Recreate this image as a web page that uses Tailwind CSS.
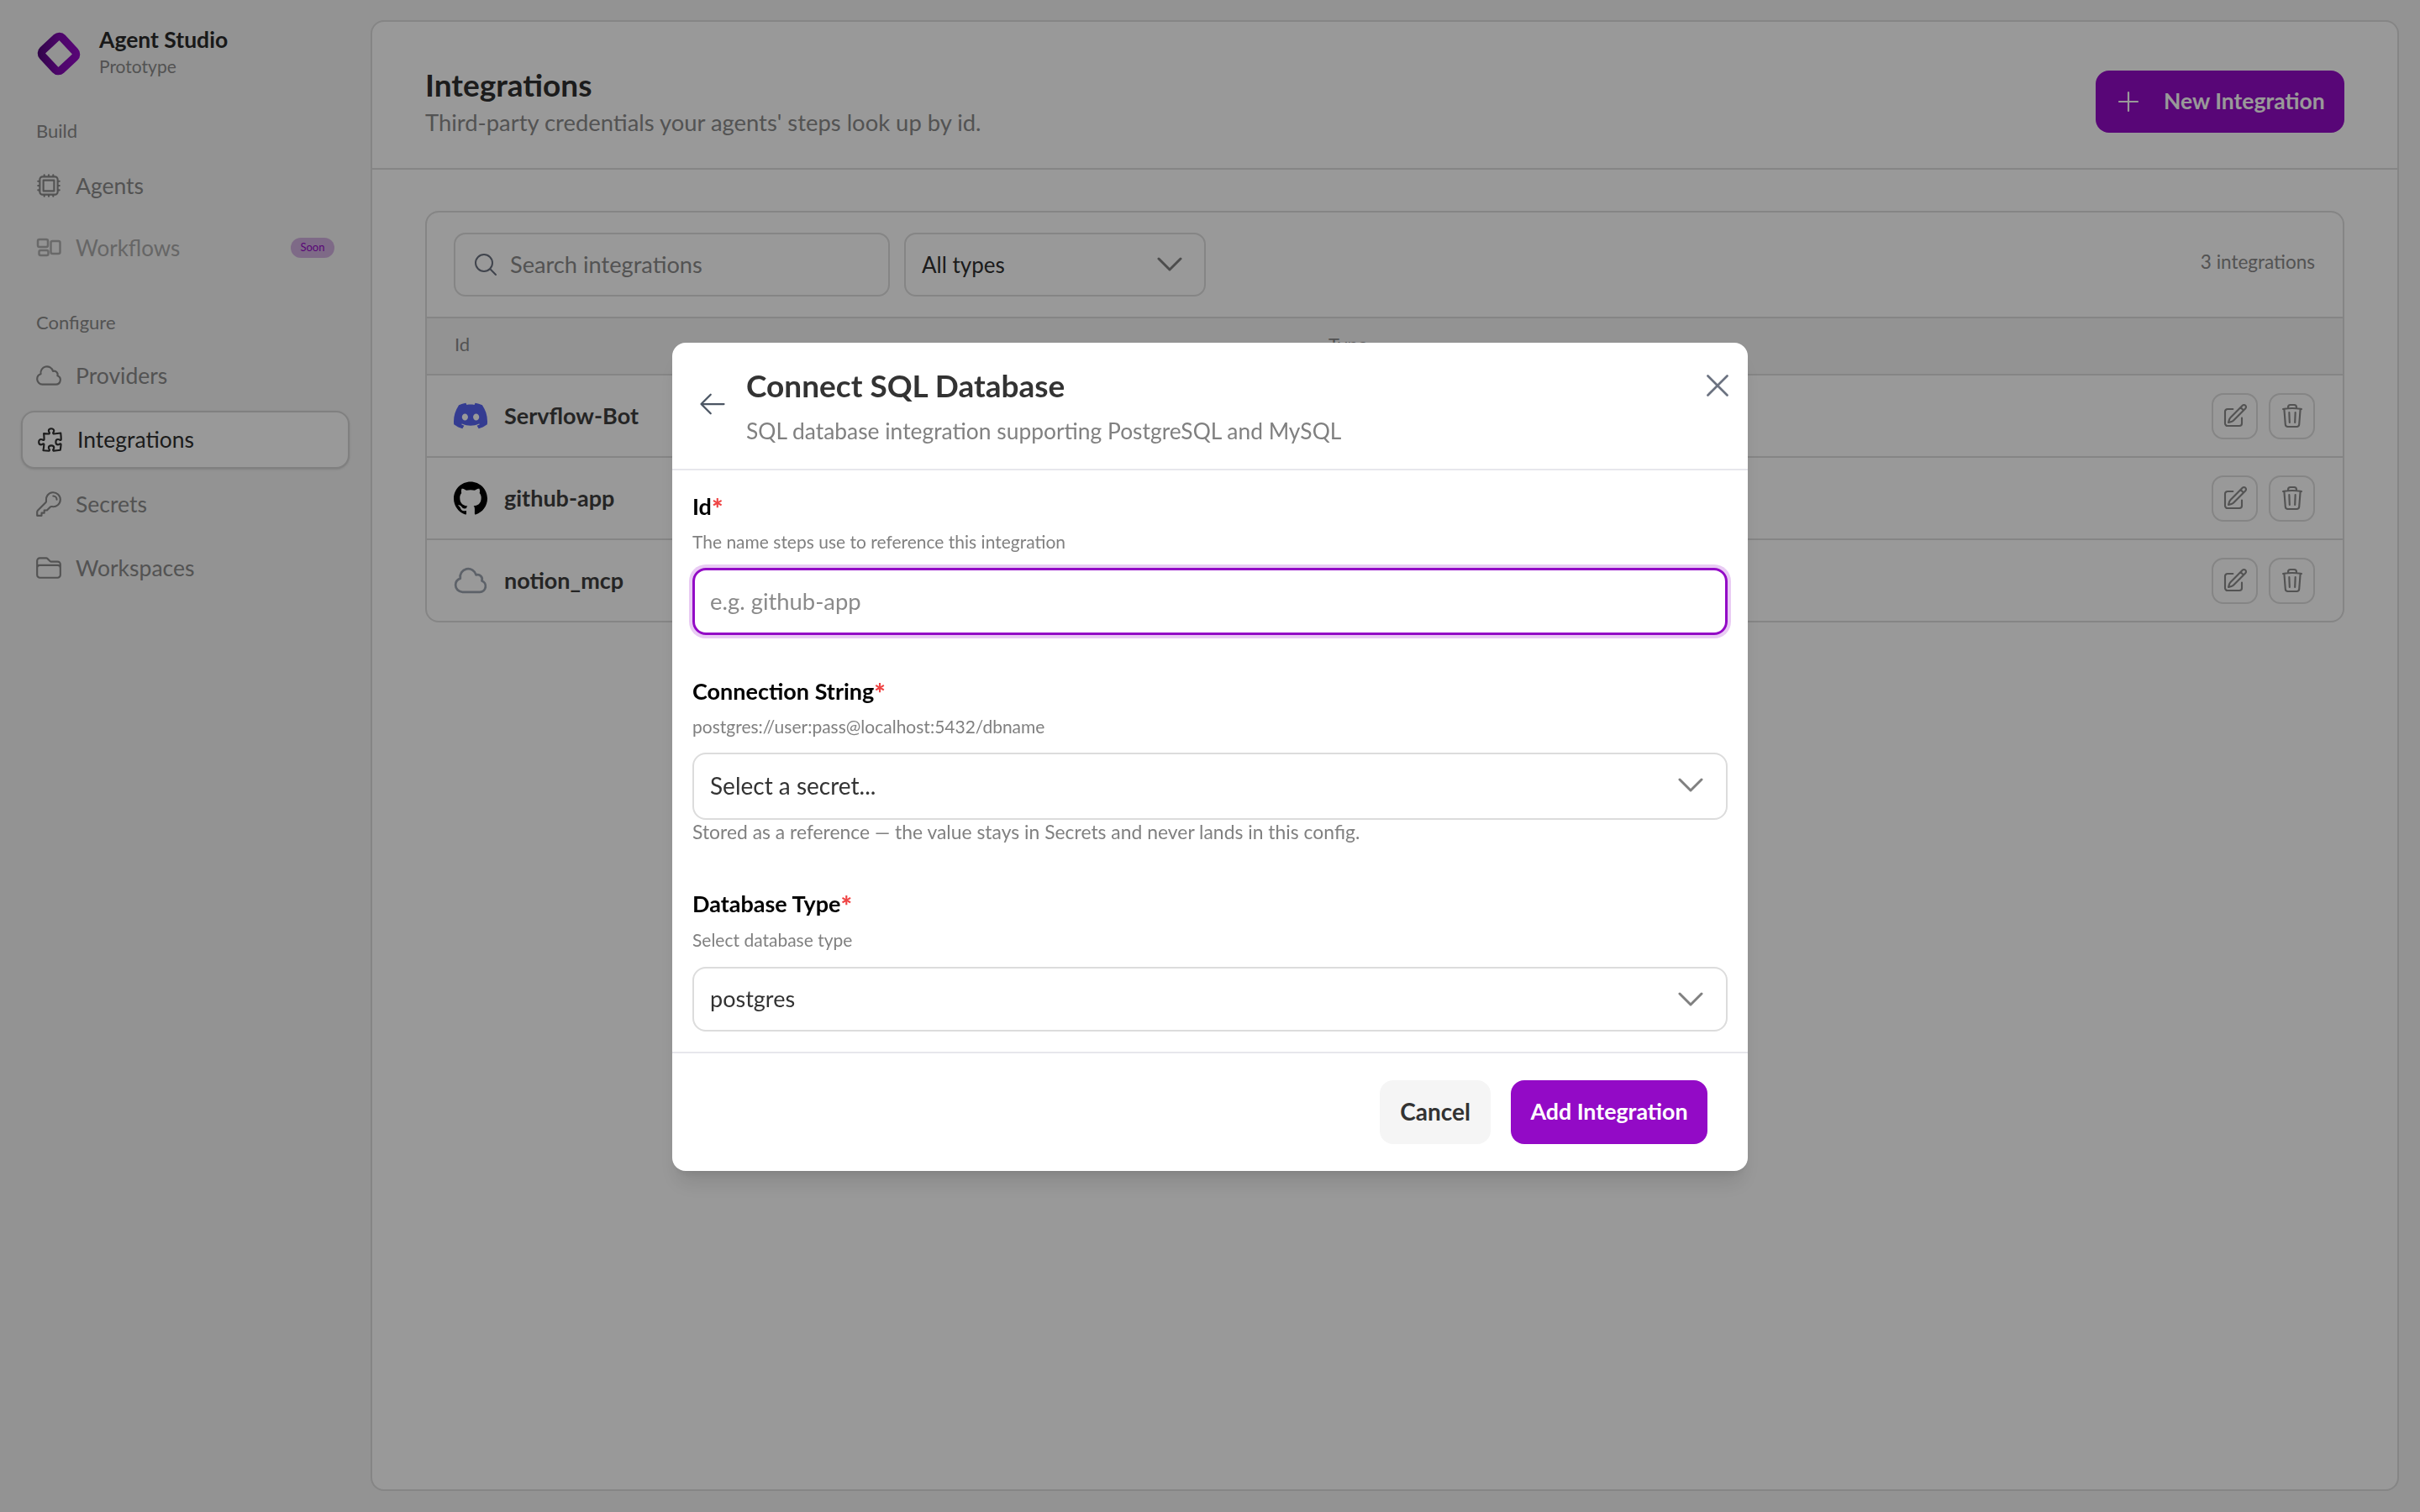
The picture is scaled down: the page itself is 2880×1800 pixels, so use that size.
<!DOCTYPE html>
<html lang="en">
<head>
    <meta charset="UTF-8">
    <title>Agent Studio - Integrations</title>
    <script src="https://cdn.jsdelivr.net/npm/@tailwindcss/browser@4"></script>
</head>
<body class="bg-[#f5f5f5] text-[#2f2f2f] font-['Lato',sans-serif]">

    <div class="flex h-screen">
        <!-- Sidebar -->
        <aside class="w-[440px] shrink-0 pl-[25px] pr-[24px]">
            <div class="mt-[38px] ml-[19px] flex h-[52px] items-start gap-[22px]">
                <svg class="h-[52px] w-[52px]" viewBox="0 0 52 52" fill="none">
                    <defs>
                        <linearGradient id="logoGrad" gradientUnits="userSpaceOnUse" x1="8" y1="44" x2="44" y2="10">
                            <stop offset="0" stop-color="#500878"/>
                            <stop offset="0.5" stop-color="#800ab0"/>
                            <stop offset="1" stop-color="#930ac6"/>
                        </linearGradient>
                    </defs>
                    <rect x="10" y="10" width="32" height="32" rx="5" transform="rotate(47 26 26)" stroke="url(#logoGrad)" stroke-width="9.5" stroke-linejoin="round"/>
                </svg>
                <div class="-mt-[8px]">
                    <p class="text-[26.5px] leading-[34px] font-bold text-[#2b2b2b]">Agent Studio</p>
                    <p class="mt-[1px] text-[21px] leading-[28px] text-[#8a8a8a]">Prototype</p>
                </div>
            </div>

            <p class="mt-[51px] ml-[18px] text-[22px] leading-[30px] text-[#8a8a8a]">Build</p>
            <nav class="mt-[16px] flex flex-col gap-[6px] text-[26.5px] text-[#8a8a8a]">
                <a class="flex h-[68px] items-center gap-[15px] pl-[16px]">
                    <svg class="h-[34px] w-[34px]" viewBox="0 0 24 24" fill="none" stroke="currentColor" stroke-width="1.5" stroke-linecap="round" stroke-linejoin="round"><path d="M8.25 3v1.5M4.5 8.25H3m18 0h-1.5M4.5 12H3m18 0h-1.5m-15 3.75H3m18 0h-1.5M8.25 19.5V21M12 3v1.5m0 15V21m3.75-18v1.5m0 15V21m-9-1.5h10.5a2.25 2.25 0 0 0 2.25-2.25V6.75a2.25 2.25 0 0 0-2.25-2.25H6.75A2.25 2.25 0 0 0 4.5 6.75v10.5a2.25 2.25 0 0 0 2.25 2.25Zm.75-12h9v9h-9v-9Z"/></svg>
                    <span class="pt-[2px]">Agents</span>
                </a>
                <a class="flex h-[68px] items-center gap-[15px] pl-[16px] pr-[18px]">
                    <svg class="h-[34px] w-[34px] text-[#b0b0b0]" viewBox="0 0 34 34" fill="none" stroke="currentColor" stroke-width="2.5"><rect x="4" y="7" width="12" height="9" rx="2"/><rect x="5.5" y="20" width="11" height="6" rx="2"/><rect x="19.5" y="9" width="11" height="15" rx="2"/></svg>
                    <span class="text-[26px] text-[#aaaaaa]">Workflows</span>
                    <span class="ml-auto flex h-[24px] w-[52px] items-center justify-center rounded-full bg-[#d3b1e1] text-[13px] text-[#930ac6]">Soon</span>
                </a>
            </nav>

            <p class="mt-[40px] ml-[18px] text-[22px] leading-[30px] text-[#8a8a8a]">Configure</p>
            <nav class="mt-[14px] flex flex-col gap-[8px] text-[26.5px] text-[#8a8a8a]">
                <a class="flex h-[68px] items-center gap-[15px] pl-[16px]">
                    <svg class="h-[34px] w-[34px]" viewBox="0 0 24 24" fill="none" stroke="currentColor" stroke-width="1.5" stroke-linecap="round" stroke-linejoin="round"><path d="M2.25 15a4.5 4.5 0 0 0 4.5 4.5H18a3.75 3.75 0 0 0 1.332-7.257 3 3 0 0 0-3.758-3.848 5.25 5.25 0 0 0-10.233 2.33A4.502 4.502 0 0 0 2.25 15Z"/></svg>
                    <span class="pt-[1px]">Providers</span>
                </a>
                <a class="flex h-[69px] items-center gap-[15px] rounded-[16px] border-2 border-[#d6d6d6] bg-white pl-[16px] text-[#2f2f2f] shadow-sm">
                    <svg class="h-[34px] w-[34px]" viewBox="0 0 24 24" fill="none" stroke="currentColor" stroke-width="1.5" stroke-linecap="round" stroke-linejoin="round"><path d="M14.25 6.087c0-.355.186-.676.401-.959.221-.29.349-.634.349-1.003 0-1.036-1.007-1.875-2.25-1.875s-2.25.84-2.25 1.875c0 .369.128.713.349 1.003.215.283.401.604.401.959v0a.64.64 0 0 1-.657.643 48.39 48.39 0 0 1-4.163-.3c.186 1.613.293 3.25.315 4.907a.656.656 0 0 1-.658.663v0c-.355 0-.676-.186-.959-.401a1.647 1.647 0 0 0-1.003-.349c-1.036 0-1.875 1.007-1.875 2.25s.84 2.25 1.875 2.25c.369 0 .713-.128 1.003-.349.283-.215.604-.401.959-.401v0c.31 0 .555.26.532.57a48.039 48.039 0 0 1-.642 5.056c1.518.19 3.058.309 4.616.354a.64.64 0 0 0 .657-.643v0c0-.355-.186-.676-.401-.959a1.647 1.647 0 0 1-.349-1.003c0-1.035 1.008-1.875 2.25-1.875 1.243 0 2.25.84 2.25 1.875 0 .369-.128.713-.349 1.003-.215.283-.4.604-.4.959v0c0 .333.277.599.61.58a48.1 48.1 0 0 0 5.427-.63 48.05 48.05 0 0 0 .582-4.717.532.532 0 0 0-.533-.57v0c-.355 0-.676.186-.959.401-.29.221-.634.349-1.003.349-1.035 0-1.875-1.007-1.875-2.25s.84-2.25 1.875-2.25c.37 0 .713.128 1.003.349.283.215.604.401.96.401v0a.656.656 0 0 0 .658-.663 48.422 48.422 0 0 0-.37-5.36c-1.886.342-3.81.574-5.766.689a.578.578 0 0 1-.61-.58v0Z"/></svg>
                    <span class="pt-[1px]">Integrations</span>
                </a>
                <a class="flex h-[68px] items-center gap-[15px] pl-[16px]">
                    <svg class="h-[34px] w-[34px]" viewBox="0 0 24 24" fill="none" stroke="currentColor" stroke-width="1.5" stroke-linecap="round" stroke-linejoin="round"><path d="M15.75 5.25a3 3 0 0 1 3 3m3 0a6 6 0 0 1-7.029 5.912c-.563-.097-1.159.026-1.563.43L10.5 17.25H8.25v2.25H6v2.25H2.25v-2.818c0-.597.237-1.17.659-1.591l6.499-6.499c.404-.404.527-1 .43-1.563A6 6 0 1 1 21.75 8.25Z"/></svg>
                    <span class="pt-[1px]">Secrets</span>
                </a>
                <a class="flex h-[68px] items-center gap-[15px] pl-[16px]">
                    <svg class="h-[34px] w-[34px]" viewBox="0 0 24 24" fill="none" stroke="currentColor" stroke-width="1.5" stroke-linecap="round" stroke-linejoin="round"><path d="M2.25 12.75V12A2.25 2.25 0 0 1 4.5 9.75h15A2.25 2.25 0 0 1 21.75 12v.75m-8.69-6.44-2.12-2.12a1.5 1.5 0 0 0-1.061-.44H4.5A2.25 2.25 0 0 0 2.25 6v12a2.25 2.25 0 0 0 2.25 2.25h15A2.25 2.25 0 0 0 21.75 18V9a2.25 2.25 0 0 0-2.25-2.25h-5.379a1.5 1.5 0 0 1-1.06-.44Z"/></svg>
                    <span class="pt-[1px]">Workspaces</span>
                </a>
            </nav>
        </aside>

        <!-- Main panel -->
        <main class="mt-[24px] mr-[25px] mb-[25px] ml-[1px] flex-1 rounded-[16px] border-2 border-[#dedede] bg-white">
            <header class="flex h-[176px] items-start justify-between border-b-2 border-[#dedede] px-[63px] pt-[52px]">
                <div>
                    <h1 class="text-[37px] leading-[46px] font-bold text-[#2f2f2f]">Integrations</h1>
                    <p class="mt-[4px] text-[27.4px] leading-[36px] text-[#8a8a8a]">Third-party credentials your agents' steps look up by id.</p>
                </div>
                <button class="mt-[6px] flex h-[74px] w-[296px] items-center gap-[29px] rounded-[16px] bg-[#930ac6] pl-[26px] text-[26.5px] font-bold text-white">
                    <svg class="h-[26px] w-[26px]" viewBox="0 0 26 26" fill="none" stroke="currentColor" stroke-width="2.2" stroke-linecap="round"><path d="M13 2v22M2 13h22"/></svg>
                    New Integration
                </button>
            </header>

            <div class="px-[63px] pt-[49px]">
                <div class="overflow-hidden rounded-[16px] border-2 border-[#dedede]">
                    <!-- Toolbar -->
                    <div class="flex h-[126px] items-start border-b-2 border-[#dedede] px-[32px] pt-[24px]">
                        <div class="flex h-[76px] w-[519px] items-center gap-[13px] rounded-[14px] border-2 border-[#dedede] px-[20px]">
                            <svg class="h-[32px] w-[32px] shrink-0 text-[#6b7280]" viewBox="0 0 24 24" fill="none" stroke="currentColor" stroke-width="1.5" stroke-linecap="round" stroke-linejoin="round"><path d="m21 21-5.197-5.197m0 0A7.5 7.5 0 1 0 5.196 5.196a7.5 7.5 0 0 0 10.607 10.607Z"/></svg>
                            <input class="w-full bg-transparent text-[27.2px] outline-none placeholder:text-[#8a8a8a]" placeholder="Search integrations">
                        </div>
                        <div class="ml-[17px] flex h-[76px] w-[359px] items-center justify-between rounded-[14px] border-2 border-[#dedede] pr-[26px] pl-[19px] text-[26px] text-[#2f2f2f]">
                            All types
                            <svg class="h-[18px] w-[30px] text-[#808080]" viewBox="0 0 30 18" fill="none" stroke="currentColor" stroke-width="3" stroke-linecap="round" stroke-linejoin="round"><path d="M2 2l13 13L28 2"/></svg>
                        </div>
                        <p class="mt-[20px] ml-auto pr-[1px] text-[22.5px] leading-[30px] text-[#8a8a8a]">3 integrations</p>
                    </div>
                    <!-- Table head -->
                    <div class="flex h-[68px] items-center border-b-2 border-[#dedede] bg-[#f5f5f5] px-[33px] pb-[6px] text-[22px] text-[#8a8a8a]">
                        <span class="w-[1040px]">Id</span>
                        <span>Type</span>
                    </div>
                    <!-- Rows -->
                    <div class="flex h-[98px] items-center border-b-2 border-[#dedede] pr-[33px] pl-[32px]">
                        <div class="flex items-center gap-[20px] text-[27px] font-bold text-[#3e3e3e]">
                            <svg class="h-[40px] w-[40px]" viewBox="0 0 24 24" fill="#5865F2"><path d="M20.317 4.3698a19.7913 19.7913 0 00-4.8851-1.5152.0741.0741 0 00-.0785.0371c-.211.3753-.4447.8648-.6083 1.2495-1.8447-.2762-3.68-.2762-5.4868 0-.1636-.3933-.4058-.8742-.6177-1.2495a.077.077 0 00-.0785-.037 19.7363 19.7363 0 00-4.8852 1.515.0699.0699 0 00-.0321.0277C.5334 9.0458-.319 13.5799.0992 18.0578a.0824.0824 0 00.0312.0561c2.0528 1.5076 4.0413 2.4228 5.9929 3.0294a.0777.0777 0 00.0842-.0276c.4616-.6304.8731-1.2952 1.226-1.9942a.076.076 0 00-.0416-.1057c-.6528-.2476-1.2743-.5495-1.8722-.8923a.077.077 0 01-.0076-.1277c.1258-.0943.2517-.1923.3718-.2914a.0743.0743 0 01.0776-.0105c3.9278 1.7933 8.18 1.7933 12.0614 0a.0739.0739 0 01.0785.0095c.1202.099.246.1981.3728.2924a.077.077 0 01-.0066.1276 12.2986 12.2986 0 01-1.873.8914.0766.0766 0 00-.0407.1067c.3604.698.7719 1.3628 1.225 1.9932a.076.076 0 00.0842.0286c1.961-.6067 3.9495-1.5219 6.0023-3.0294a.077.077 0 00.0313-.0552c.5004-5.177-.8382-9.6739-3.5485-13.6604a.061.061 0 00-.0312-.0286zM8.02 15.3312c-1.1825 0-2.1569-1.0857-2.1569-2.419 0-1.3332.9555-2.4189 2.157-2.4189 1.2108 0 2.1757 1.0952 2.1568 2.419 0 1.3332-.9555 2.4189-2.1569 2.4189zm7.9748 0c-1.1825 0-2.1569-1.0857-2.1569-2.419 0-1.3332.9554-2.4189 2.1569-2.4189 1.2108 0 2.1757 1.0952 2.1568 2.419 0 1.3332-.946 2.4189-2.1568 2.4189Z"/></svg>
                            Servflow-Bot
                        </div>
                        <div class="ml-auto flex gap-[13px]">
                            <button class="flex h-[55px] w-[55px] items-center justify-center rounded-[14px] border-2 border-[#dedede] text-[#8a8a8a]"><svg class="h-[32px] w-[32px]" viewBox="0 0 24 24" fill="none" stroke="currentColor" stroke-width="1.6" stroke-linecap="round" stroke-linejoin="round"><path d="m16.862 4.487 1.687-1.688a1.875 1.875 0 1 1 2.652 2.652L10.582 16.07a4.5 4.5 0 0 1-1.897 1.13L6 18l.8-2.685a4.5 4.5 0 0 1 1.13-1.897l8.932-8.931Zm0 0L19.5 7.125M18 14v4.75A2.25 2.25 0 0 1 15.75 21H5.25A2.25 2.25 0 0 1 3 18.75V8.25A2.25 2.25 0 0 1 5.25 6H10"/></svg></button>
                            <button class="flex h-[55px] w-[55px] items-center justify-center rounded-[14px] border-2 border-[#dedede] text-[#8a8a8a]"><svg class="h-[32px] w-[32px]" viewBox="0 0 24 24" fill="none" stroke="currentColor" stroke-width="1.6" stroke-linecap="round" stroke-linejoin="round"><path d="m14.74 9-.346 9m-4.788 0L9.26 9m9.968-3.21c.342.052.682.107 1.022.166m-1.022-.165L18.16 19.673a2.25 2.25 0 0 1-2.244 2.077H8.084a2.25 2.25 0 0 1-2.244-2.077L4.772 5.79m14.456 0a48.108 48.108 0 0 0-3.478-.397m-12 .562c.34-.059.68-.114 1.022-.165m0 0a48.11 48.11 0 0 1 3.478-.397m7.5 0v-.916c0-1.18-.91-2.164-2.09-2.201a51.964 51.964 0 0 0-3.32 0c-1.18.037-2.09 1.022-2.09 2.201v.916m7.5 0a48.667 48.667 0 0 0-7.5 0"/></svg></button>
                        </div>
                    </div>
                    <div class="flex h-[98px] items-center border-b-2 border-[#dedede] pr-[33px] pl-[32px]">
                        <div class="flex items-center gap-[20px] text-[27px] font-bold text-[#3e3e3e]">
                            <svg class="h-[40px] w-[40px]" viewBox="0 0 24 24" fill="#000"><path d="M12 .297c-6.63 0-12 5.373-12 12 0 5.303 3.438 9.8 8.205 11.385.6.113.82-.258.82-.577 0-.285-.01-1.04-.015-2.04-3.338.724-4.042-1.61-4.042-1.61C4.422 18.07 3.633 17.7 3.633 17.7c-1.087-.744.084-.729.084-.729 1.205.084 1.838 1.236 1.838 1.236 1.07 1.835 2.809 1.305 3.495.998.108-.776.417-1.305.76-1.605-2.665-.3-5.466-1.332-5.466-5.93 0-1.31.465-2.38 1.235-3.22-.135-.303-.54-1.523.105-3.176 0 0 1.005-.322 3.3 1.23.96-.267 1.98-.399 3-.405 1.02.006 2.04.138 3 .405 2.28-1.552 3.285-1.23 3.285-1.23.645 1.653.24 2.873.12 3.176.765.84 1.23 1.91 1.23 3.22 0 4.61-2.805 5.625-5.475 5.92.42.36.81 1.096.81 2.22 0 1.606-.015 2.896-.015 3.286 0 .315.21.69.825.57C20.565 22.092 24 17.592 24 12.297c0-6.627-5.373-12-12-12"/></svg>
                            github-app
                        </div>
                        <div class="ml-auto flex gap-[13px]">
                            <button class="flex h-[55px] w-[55px] items-center justify-center rounded-[14px] border-2 border-[#dedede] text-[#8a8a8a]"><svg class="h-[32px] w-[32px]" viewBox="0 0 24 24" fill="none" stroke="currentColor" stroke-width="1.6" stroke-linecap="round" stroke-linejoin="round"><path d="m16.862 4.487 1.687-1.688a1.875 1.875 0 1 1 2.652 2.652L10.582 16.07a4.5 4.5 0 0 1-1.897 1.13L6 18l.8-2.685a4.5 4.5 0 0 1 1.13-1.897l8.932-8.931Zm0 0L19.5 7.125M18 14v4.75A2.25 2.25 0 0 1 15.75 21H5.25A2.25 2.25 0 0 1 3 18.75V8.25A2.25 2.25 0 0 1 5.25 6H10"/></svg></button>
                            <button class="flex h-[55px] w-[55px] items-center justify-center rounded-[14px] border-2 border-[#dedede] text-[#8a8a8a]"><svg class="h-[32px] w-[32px]" viewBox="0 0 24 24" fill="none" stroke="currentColor" stroke-width="1.6" stroke-linecap="round" stroke-linejoin="round"><path d="m14.74 9-.346 9m-4.788 0L9.26 9m9.968-3.21c.342.052.682.107 1.022.166m-1.022-.165L18.16 19.673a2.25 2.25 0 0 1-2.244 2.077H8.084a2.25 2.25 0 0 1-2.244-2.077L4.772 5.79m14.456 0a48.108 48.108 0 0 0-3.478-.397m-12 .562c.34-.059.68-.114 1.022-.165m0 0a48.11 48.11 0 0 1 3.478-.397m7.5 0v-.916c0-1.18-.91-2.164-2.09-2.201a51.964 51.964 0 0 0-3.32 0c-1.18.037-2.09 1.022-2.09 2.201v.916m7.5 0a48.667 48.667 0 0 0-7.5 0"/></svg></button>
                        </div>
                    </div>
                    <div class="flex h-[96px] items-center pr-[33px] pl-[32px]">
                        <div class="flex items-center gap-[20px] text-[27px] font-bold text-[#3e3e3e]">
                            <svg class="-mx-[2px] h-[44px] w-[44px] text-[#9ca3af]" viewBox="0 0 24 24" fill="none" stroke="currentColor" stroke-width="1.5" stroke-linecap="round" stroke-linejoin="round"><path d="M2.25 15a4.5 4.5 0 0 0 4.5 4.5H18a3.75 3.75 0 0 0 1.332-7.257 3 3 0 0 0-3.758-3.848 5.25 5.25 0 0 0-10.233 2.33A4.502 4.502 0 0 0 2.25 15Z"/></svg>
                            notion_mcp
                        </div>
                        <div class="ml-auto flex gap-[13px]">
                            <button class="flex h-[55px] w-[55px] items-center justify-center rounded-[14px] border-2 border-[#dedede] text-[#8a8a8a]"><svg class="h-[32px] w-[32px]" viewBox="0 0 24 24" fill="none" stroke="currentColor" stroke-width="1.6" stroke-linecap="round" stroke-linejoin="round"><path d="m16.862 4.487 1.687-1.688a1.875 1.875 0 1 1 2.652 2.652L10.582 16.07a4.5 4.5 0 0 1-1.897 1.13L6 18l.8-2.685a4.5 4.5 0 0 1 1.13-1.897l8.932-8.931Zm0 0L19.5 7.125M18 14v4.75A2.25 2.25 0 0 1 15.75 21H5.25A2.25 2.25 0 0 1 3 18.75V8.25A2.25 2.25 0 0 1 5.25 6H10"/></svg></button>
                            <button class="flex h-[55px] w-[55px] items-center justify-center rounded-[14px] border-2 border-[#dedede] text-[#8a8a8a]"><svg class="h-[32px] w-[32px]" viewBox="0 0 24 24" fill="none" stroke="currentColor" stroke-width="1.6" stroke-linecap="round" stroke-linejoin="round"><path d="m14.74 9-.346 9m-4.788 0L9.26 9m9.968-3.21c.342.052.682.107 1.022.166m-1.022-.165L18.16 19.673a2.25 2.25 0 0 1-2.244 2.077H8.084a2.25 2.25 0 0 1-2.244-2.077L4.772 5.79m14.456 0a48.108 48.108 0 0 0-3.478-.397m-12 .562c.34-.059.68-.114 1.022-.165m0 0a48.11 48.11 0 0 1 3.478-.397m7.5 0v-.916c0-1.18-.91-2.164-2.09-2.201a51.964 51.964 0 0 0-3.32 0c-1.18.037-2.09 1.022-2.09 2.201v.916m7.5 0a48.667 48.667 0 0 0-7.5 0"/></svg></button>
                        </div>
                    </div>
                </div>
            </div>
        </main>
    </div>

    <!-- Modal -->
    <div class="fixed inset-0 flex items-center justify-center bg-black/40 pt-[2px]">
        <div class="w-[1280px] rounded-[16px] bg-white shadow-xl">
            <div class="flex h-[152px] items-start border-b-2 border-[#e7e7ec] pr-[13px] pl-[30px] pt-[28px]">
                <svg class="mt-[27px] h-[36px] w-[36px] text-[#4b5563]" viewBox="0 0 24 24" fill="none" stroke="currentColor" stroke-width="1.5" stroke-linecap="round" stroke-linejoin="round"><path d="M10.5 19.5 3 12m0 0 7.5-7.5M3 12h18"/></svg>
                <div class="ml-[22px]">
                    <h2 class="text-[37px] leading-[46px] font-bold text-[#333333]">Connect SQL Database</h2>
                    <p class="mt-[13px] text-[26.4px] leading-[36px] text-[#808080]">SQL database integration supporting PostgreSQL and MySQL</p>
                </div>
                <svg class="ml-auto h-[46px] w-[46px] text-[#6b7280]" viewBox="0 0 24 24" fill="none" stroke="currentColor" stroke-width="1.4" stroke-linecap="round" stroke-linejoin="round"><path d="M6 18 18 6M6 6l12 12"/></svg>
            </div>

            <div class="px-[24px] pt-[25px] pb-[24px]">
                <label class="block text-[27px] leading-[36px] font-bold text-black">Id<span class="align-[-4px] text-[32px] leading-[0] font-black text-[#ef4444]">*</span></label>
                <p class="mt-[10px] text-[21px] leading-[28px] text-[#808080]">The name steps use to reference this integration</p>
                <input class="mt-[17px] h-[80px] w-full rounded-[16px] border-[3px] border-[#930ac6] px-[18px] pb-[2px] text-[27.4px] outline-none ring-4 ring-[#e9cbf4] placeholder:text-[#8a8a8a]" placeholder="e.g. github-app">

                <label class="mt-[49px] block text-[27px] leading-[36px] font-bold text-black">Connection String<span class="align-[-4px] text-[32px] leading-[0] font-black text-[#ef4444]">*</span></label>
                <p class="mt-[10px] text-[21px] leading-[28px] text-[#808080]">postgres://user:pass@localhost:5432/dbname</p>
                <div class="mt-[17px] flex h-[80px] items-center justify-between rounded-[16px] border-2 border-[#dcdcdc] pr-[27px] pb-[2px] pl-[19px] text-[28px] text-[#333333]">
                    Select a secret...
                    <svg class="h-[18px] w-[30px] text-[#808080]" viewBox="0 0 30 18" fill="none" stroke="currentColor" stroke-width="3" stroke-linecap="round" stroke-linejoin="round"><path d="M2 2l13 13L28 2"/></svg>
                </div>
                <p class="text-[22.9px] leading-[28px] text-[#808080]">Stored as a reference — the value stays in Secrets and never lands in this config.</p>

                <label class="mt-[54px] block text-[27px] leading-[36px] font-bold text-black">Database Type<span class="align-[-4px] text-[32px] leading-[0] font-black text-[#ef4444]">*</span></label>
                <p class="mt-[11px] text-[21px] leading-[28px] text-[#808080]">Select database type</p>
                <div class="mt-[18px] flex h-[77px] items-center justify-between rounded-[16px] border-2 border-[#dcdcdc] pr-[27px] pl-[19px] text-[27px] text-[#333333]">
                    postgres
                    <svg class="h-[18px] w-[30px] text-[#808080]" viewBox="0 0 30 18" fill="none" stroke="currentColor" stroke-width="3" stroke-linecap="round" stroke-linejoin="round"><path d="M2 2l13 13L28 2"/></svg>
                </div>
            </div>

            <div class="flex justify-end gap-[24px] border-t-2 border-[#e7e7ec] pt-[32px] pr-[48px] pb-[32px]">
                <button class="h-[76px] w-[132px] rounded-[16px] bg-[#f5f5f5] pb-[2px] text-[28px] font-bold text-[#333333]">Cancel</button>
                <button class="h-[76px] w-[234px] rounded-[16px] bg-[#930ac6] pb-[2px] text-[26.8px] font-bold text-white">Add Integration</button>
            </div>
        </div>
    </div>

</body>
</html>
